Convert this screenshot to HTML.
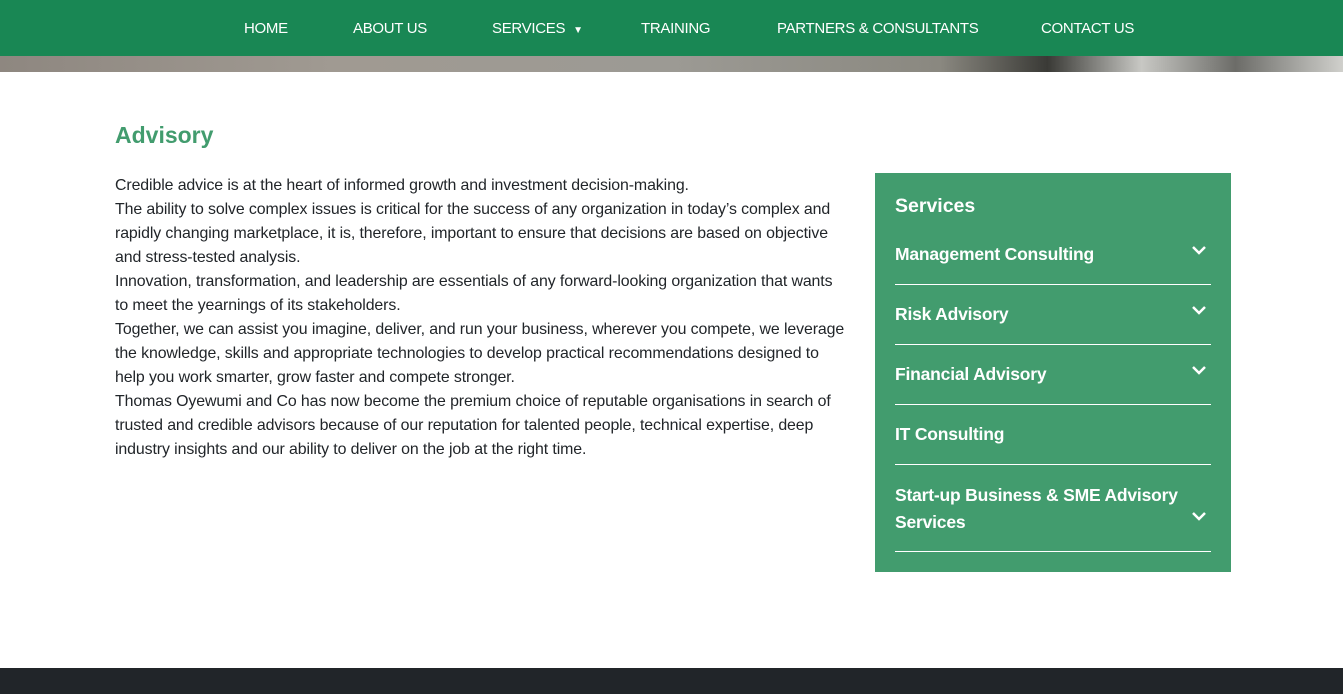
<!DOCTYPE html>
<html><head><meta charset="utf-8"><style>
*{margin:0;padding:0;box-sizing:border-box}
body{width:1343px;height:694px;position:relative;font-family:"Liberation Sans",sans-serif;background:#fff;overflow:hidden}
nav{position:absolute;left:0;top:0;width:1343px;height:56px;background:#198754}
nav span{position:absolute;top:20px;color:#fff;font-size:15px;white-space:nowrap;letter-spacing:-0.3px}
.strip{position:absolute;top:56px;left:0;width:1343px;height:16px;background:linear-gradient(90deg,#8e8780 0%,#a09a92 25%,#9c9a94 50%,#8a8880 70%,#3a3a36 78%,#c8c8c4 85%,#6c6c68 92%,#d0d0cc 100%)}
h1{position:absolute;left:115px;top:122px;font-size:23px;color:#429c6e;font-weight:bold}
.txt{position:absolute;left:115px;top:174px;font-size:15.9px;line-height:24px;color:#212529;white-space:nowrap;letter-spacing:-0.1px}
.side{position:absolute;left:875px;top:173px;width:356px;height:399px;background:#429c6e;color:#fff}
.side h2{position:absolute;left:20px;top:22px;font-size:19.5px;font-weight:bold}
.it{position:absolute;left:20px;width:316px;border-bottom:1px solid #fff;font-size:17.5px;font-weight:bold;letter-spacing:-0.2px}
.it span{position:absolute;left:0}
.it svg{position:absolute;right:4px}
footer{position:absolute;left:0;top:668px;width:1343px;height:26px;background:#212529}
</style></head><body>
<nav>
<span style="left:244px">HOME</span>
<span style="left:353px">ABOUT US</span>
<span style="left:492px">SERVICES <span style="position:static;font-size:10px;margin-left:4px">▼</span></span>
<span style="left:641px">TRAINING</span>
<span style="left:777px">PARTNERS &amp; CONSULTANTS</span>
<span style="left:1041px">CONTACT US</span>
</nav>
<div class="strip"></div>
<h1>Advisory</h1>
<div class="txt">Credible advice is at the heart of informed growth and investment decision-making.<br>The ability to solve complex issues is critical for the success of any organization in today’s complex and<br>rapidly changing marketplace, it is, therefore, important to ensure that decisions are based on objective<br>and stress-tested analysis.<br>Innovation, transformation, and leadership are essentials of any forward-looking organization that wants<br>to meet the yearnings of its stakeholders.<br>Together, we can assist you imagine, deliver, and run your business, wherever you compete, we leverage<br>the knowledge, skills and appropriate technologies to develop practical recommendations designed to<br>help you work smarter, grow faster and compete stronger.<br>Thomas Oyewumi and Co has now become the premium choice of reputable organisations in search of<br>trusted and credible advisors because of our reputation for talented people, technical expertise, deep<br>industry insights and our ability to deliver on the job at the right time.</div>
<div class="side">
<h2>Services</h2>
<div class="it" style="top:51px;height:61px"><span style="top:20px">Management Consulting</span><svg style="top:20px" width="16" height="12" viewBox="0 0 16 12"><path d="M2 3l6 6 6-6" fill="none" stroke="#fff" stroke-width="2.5"/></svg></div>
<div class="it" style="top:112px;height:60px"><span style="top:19px">Risk Advisory</span><svg style="top:19px" width="16" height="12" viewBox="0 0 16 12"><path d="M2 3l6 6 6-6" fill="none" stroke="#fff" stroke-width="2.5"/></svg></div>
<div class="it" style="top:172px;height:60px"><span style="top:19px">Financial Advisory</span><svg style="top:19px" width="16" height="12" viewBox="0 0 16 12"><path d="M2 3l6 6 6-6" fill="none" stroke="#fff" stroke-width="2.5"/></svg></div>
<div class="it" style="top:232px;height:60px"><span style="top:19px">IT Consulting</span></div>
<div class="it" style="top:292px;height:87px"><span style="top:17px;line-height:27px">Start-up Business &amp; SME Advisory<br>Services</span><svg style="top:45px" width="16" height="12" viewBox="0 0 16 12"><path d="M2 3l6 6 6-6" fill="none" stroke="#fff" stroke-width="2.5"/></svg></div>
</div>
<footer></footer>
</body></html>
